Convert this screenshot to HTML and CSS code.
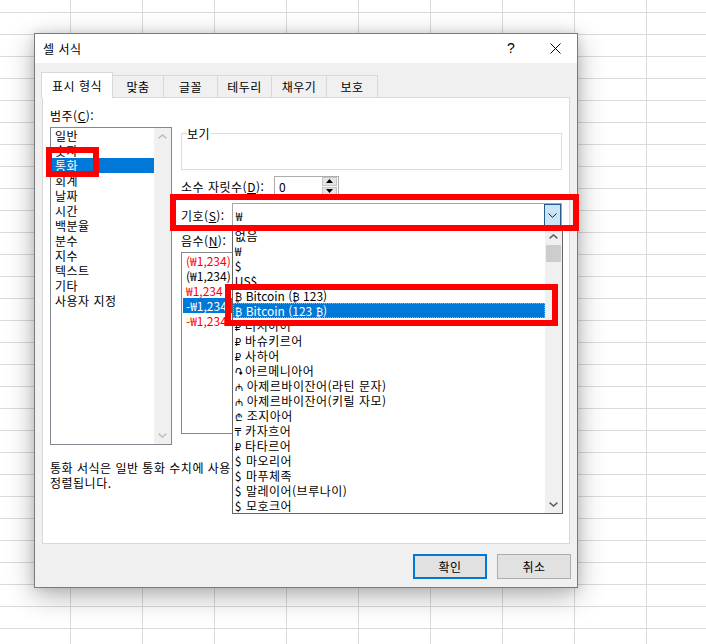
FILE: index.html
```html
<!DOCTYPE html>
<html lang="ko">
<head>
<meta charset="utf-8">
<title>셀 서식</title>
<link rel="stylesheet" href="styles.css">
</head>
<body>
<div class="dialog">
  <div class="titlebar">
    <span class="title">셀 서식</span>
    <span class="tb-btn help">?</span>
    <span class="tb-btn close"><svg width="11" height="11" viewBox="0 0 11 11"><path d="M0.5 0.5L10.5 10.5M10.5 0.5L0.5 10.5" stroke="#000" stroke-width="1" fill="none"/></svg></span>
  </div>
  <div class="body">
    <div class="tabs">
      <div class="tab active">표시 형식</div>
      <div class="tab w51">맞춤</div>
      <div class="tab w54">글꼴</div>
      <div class="tab w54">테두리</div>
      <div class="tab w55">채우기</div>
      <div class="tab w51">보호</div>
    </div>
    <div class="panel">
      <div class="cols">
        <div class="left">
          <div class="label">범주(<u>C</u>):</div>
          <div class="listbox cat">
            <div class="items">
              <div class="item">일반</div>
              <div class="item">숫자</div>
              <div class="item sel">통화</div>
              <div class="item">회계</div>
              <div class="item">날짜</div>
              <div class="item">시간</div>
              <div class="item">백분율</div>
              <div class="item">분수</div>
              <div class="item">지수</div>
              <div class="item">텍스트</div>
              <div class="item">기타</div>
              <div class="item">사용자 지정</div>
            </div>
            <div class="vscroll disabled">
              <span class="sbtn"><svg width="9" height="5" viewBox="0 0 9 5"><path d="M0.6 4.4L4.5 0.9L8.4 4.4" fill="none" stroke="currentColor" stroke-width="1.5"/></svg></span>
              <span class="track"></span>
              <span class="sbtn"><svg width="9" height="5" viewBox="0 0 9 5"><path d="M0.6 0.6L4.5 4.1L8.4 0.6" fill="none" stroke="currentColor" stroke-width="1.5"/></svg></span>
            </div>
          </div>
        </div>
        <div class="right">
          <div class="group"><span class="legend">보기</span></div>
          <div class="row decimals">
            <span class="lbl">소수 자릿수(<u>D</u>):</span>
            <div class="spin">
              <span class="spin-val">0</span>
              <div class="spin-btns">
                <span class="spin-btn"><svg width="7" height="4" viewBox="0 0 7 4"><path d="M0 4L3.5 0L7 4Z" fill="#000"/></svg></span>
                <span class="spin-btn"><svg width="7" height="4" viewBox="0 0 7 4"><path d="M0 0L3.5 4L7 0Z" fill="#000"/></svg></span>
              </div>
            </div>
          </div>
          <div class="row symbol">
            <span class="lbl">기호(<u>S</u>):</span>
            <div class="combo">
              <span class="combo-val">₩</span>
              <span class="combo-btn"><svg width="9" height="5" viewBox="0 0 9 5"><path d="M0.5 0.5L4.5 4.3L8.5 0.5" fill="none" stroke="#222" stroke-width="1"/></svg></span>
              <div class="dropdown">
                <div class="ditems">
                  <div class="ditem">없음</div>
                  <div class="ditem latin">₩</div>
                  <div class="ditem latin">$</div>
                  <div class="ditem latin">US$</div>
                  <div class="ditem latin"><span class="sym">₿</span> Bitcoin (<span class="sym">₿</span> 123)</div>
                  <div class="ditem latin sel"><span class="sym">₿</span> Bitcoin (123 <span class="sym">₿</span>)</div>
                  <div class="ditem"><span class="sym">₽</span> 러시아어</div>
                  <div class="ditem"><span class="sym">₽</span> 바슈키르어</div>
                  <div class="ditem"><span class="sym">₽</span> 사하어</div>
                  <div class="ditem"><span class="sym">֏</span> 아르메니아어</div>
                  <div class="ditem"><span class="sym">₼</span> 아제르바이잔어(라틴 문자)</div>
                  <div class="ditem"><span class="sym">₼</span> 아제르바이잔어(키릴 자모)</div>
                  <div class="ditem"><span class="sym">₾</span> 조지아어</div>
                  <div class="ditem"><span class="sym">₸</span> 카자흐어</div>
                  <div class="ditem"><span class="sym">₽</span> 타타르어</div>
                  <div class="ditem">$ 마오리어</div>
                  <div class="ditem">$ 마푸체족</div>
                  <div class="ditem">$ 말레이어(브루나이)</div>
                  <div class="ditem">$ 모호크어</div>
                </div>
                <div class="vscroll">
                  <span class="sbtn"><svg width="9" height="5" viewBox="0 0 9 5"><path d="M0.6 4.4L4.5 0.9L8.4 4.4" fill="none" stroke="currentColor" stroke-width="1.5"/></svg></span>
                  <span class="thumb"></span>
                  <span class="track"></span>
                  <span class="sbtn"><svg width="9" height="5" viewBox="0 0 9 5"><path d="M0.6 0.6L4.5 4.1L8.4 0.6" fill="none" stroke="currentColor" stroke-width="1.5"/></svg></span>
                </div>
              </div>
            </div>
          </div>
          <div class="label neg-label">음수(<u>N</u>):</div>
          <div class="listbox neg">
            <div class="items">
              <div class="item red">(₩1,234)</div>
              <div class="item">(₩1,234)</div>
              <div class="item red">₩1,234</div>
              <div class="item sel">-₩1,234</div>
              <div class="item red">-₩1,234</div>
            </div>
          </div>
        </div>
      </div>
      <p class="desc">통화 서식은 일반 통화 수치에 사용됩니다. 회계 서식을 사용하면 열의<br>정렬됩니다.</p>
    </div>
    <div class="buttons">
      <button class="btn default">확인</button>
      <button class="btn">취소</button>
    </div>
  </div>
</div>
<div class="mark mark-cat"></div>
<div class="mark mark-symbol"></div>
<div class="mark mark-bitcoin"></div>
</body>
</html>
```

FILE: styles.css
```css
html {
  background-color: #fff;
  background-image:
    linear-gradient(90deg, #dadada 1px, transparent 1px),
    linear-gradient(180deg, #dadada 1px, transparent 1px);
  background-size: 72px 22px;
  background-position: 70px 12px;
}

body {
  margin: 0;
  padding: 33px 0 0 34px;
  width: 706px;
  height: 644px;
  box-sizing: border-box;
  overflow: hidden;
  font-family: "Noto Sans CJK KR", "Noto Sans", "DejaVu Sans", sans-serif;
  font-size: 12px;
  line-height: 15px;
  letter-spacing: 0.5px;
  color: #000;
}

.dialog {
  width: 544px;
  height: 555px;
  box-sizing: border-box;
  border: 1px solid #7a7a7a;
  background: #f0f0f0;
  box-shadow: 0 8px 26px rgba(0, 0, 0, 0.3), 0 0 10px rgba(0, 0, 0, 0.12);
  display: flex;
  flex-direction: column;
}

.titlebar {
  height: 29px;
  background: #fff;
  display: flex;
  align-items: center;
}

.title {
  padding-left: 8px;
}

.tb-btn {
  width: 44px;
  height: 29px;
  display: flex;
  align-items: center;
  justify-content: center;
  font-size: 14px;
  letter-spacing: 0;
}

.help {
  margin-left: auto;
  font-family: "Liberation Sans", sans-serif;
}

.body {
  flex: 1;
  padding: 9px 7px 0 7px;
  display: flex;
  flex-direction: column;
}

.tabs {
  display: flex;
  align-items: flex-start;
  margin-left: -1px;
  position: relative;
  z-index: 1;
}

.tab {
  height: 22px;
  margin-top: 3px;
  box-sizing: border-box;
  border: 1px solid #d9d9d9;
  border-bottom: none;
  border-left: none;
  background: #f0f0f0;
  display: flex;
  align-items: center;
  justify-content: center;
}

.tab.active {
  width: 72px;
  height: 26px;
  margin-top: 0;
  border-left: 1px solid #d9d9d9;
  background: #fff;
  padding-bottom: 1px;
}

.w51 { width: 51px; }
.w54 { width: 54px; }
.w55 { width: 55px; }

.panel {
  height: 447px;
  margin-top: -1px;
  box-sizing: border-box;
  border: 1px solid #d9d9d9;
  background: #fff;
  padding: 10px 0 0 7px;
}

.cols {
  display: flex;
  gap: 9px;
}

.left {
  width: 122px;
}

.right {
  width: 381px;
}

.label {
  height: 15px;
}

.listbox {
  display: flex;
  box-sizing: border-box;
  border: 1px solid #828790;
  background: #fff;
}

.listbox.cat {
  margin-top: 4px;
  height: 318px;
}

.items {
  flex: 1;
  min-width: 0;
}

.item {
  height: 15px;
  margin-left: 1px;
  padding-left: 3px;
  white-space: nowrap;
}

.item.sel {
  background: #0078d7;
  color: #fff;
}

.item.red {
  color: #ff0000;
}

.vscroll {
  width: 17px;
  background: #f0f0f0;
  display: flex;
  flex-direction: column;
  color: #606060;
}

.vscroll.disabled {
  color: #c0c0c0;
}

.sbtn {
  height: 17px;
  display: flex;
  align-items: center;
  justify-content: center;
}

.track {
  flex: 1;
}

.thumb {
  height: 17px;
  margin: 0 1px;
  background: #cdcdcd;
}

.group {
  margin-top: 25px;
  height: 37px;
  box-sizing: border-box;
  border: 1px solid #dcdcdc;
}

.legend {
  display: block;
  width: max-content;
  margin: -8px 0 0 5px;
  padding: 0 1px 0 0;
  background: #fff;
}

.row {
  display: flex;
  align-items: center;
}

.decimals {
  margin-top: 6px;
  height: 20px;
}

.decimals .lbl {
  width: 93px;
}

.spin {
  width: 65px;
  height: 20px;
  box-sizing: border-box;
  border: 1px solid #adadad;
  display: flex;
  align-items: center;
}

.spin-val {
  flex: 1;
  padding-left: 4px;
  letter-spacing: 0;
}

.spin-btns {
  width: 15px;
  margin-right: 1px;
  height: 18px;
  display: flex;
  flex-direction: column;
  gap: 1px;
}

.spin-btn {
  flex: 1;
  box-sizing: border-box;
  border: 1px solid #c4c4c4;
  background: #e5e5e5;
  display: flex;
  align-items: center;
  justify-content: center;
}

.symbol {
  margin-top: 7px;
  height: 24px;
}

.symbol .lbl {
  width: 51px;
}

.combo {
  position: relative;
  width: 331px;
  height: 24px;
  box-sizing: border-box;
  border: 1px solid #a8a8a8;
  background: #fff;
  display: flex;
  align-items: center;
}

.combo-val {
  flex: 1;
  padding-left: 3px;
}

.combo-btn {
  width: 17px;
  height: 22px;
  box-sizing: border-box;
  border: 1px solid #245a8d;
  background: #cce4f7;
  display: flex;
  align-items: center;
  justify-content: center;
}

.dropdown {
  position: absolute;
  left: -1px;
  top: 23px;
  width: 331px;
  height: 287px;
  box-sizing: border-box;
  border: 1px solid #646464;
  background: #fff;
  display: flex;
  z-index: 5;
}

.ditems {
  flex: 1;
  min-width: 0;
  overflow: hidden;
}

.ditem {
  height: 15px;
  padding-left: 2px;
  white-space: nowrap;
}

.ditem.latin {
  letter-spacing: 0;
}

.ditem.sel {
  background: #0078d7;
  color: #fff;
  outline: 1px dotted #e8a048;
  outline-offset: -1px;
}

.sym {
  font-family: "DejaVu Sans", sans-serif;
  font-size: 10px;
  letter-spacing: 0;
}

.neg-label {
  margin-top: 6px;
}

.listbox.neg {
  margin-top: 4px;
  height: 182px;
}

.neg .item {
  padding-left: 3px;
  letter-spacing: 0;
}

.desc {
  margin: 15px 0 0 0;
}

.buttons {
  margin-top: 10px;
  margin-right: -1px;
  display: flex;
  justify-content: flex-end;
  gap: 10px;
}

.btn {
  width: 74px;
  height: 25px;
  box-sizing: border-box;
  border: 1px solid #adadad;
  background: #e1e1e1;
  font-family: inherit;
  font-size: 12px;
  letter-spacing: 0.5px;
  padding: 0;
  color: #000;
}

.btn.default {
  border: 2px solid #0078d7;
}

.mark {
  position: absolute;
  box-sizing: border-box;
  border: 6px solid #ff0000;
  z-index: 10;
}

.mark-cat {
  left: 46px;
  top: 147px;
  width: 53px;
  height: 30px;
}

.mark-symbol {
  left: 170px;
  top: 194px;
  width: 409px;
  height: 37px;
}

.mark-bitcoin {
  left: 225px;
  top: 284px;
  width: 333px;
  height: 42px;
}
```
